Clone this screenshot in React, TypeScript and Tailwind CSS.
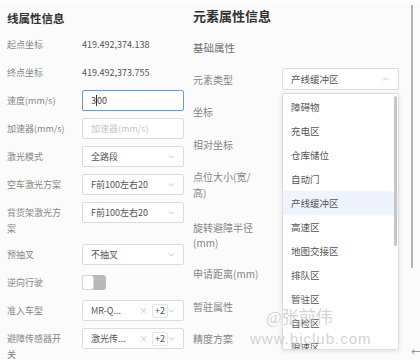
import React from 'react';

const font = { fontFamily: '"Noto Sans CJK SC", "Noto Sans", sans-serif' };

const Caret = ({ up = false }: { up?: boolean }) => (
  <svg width="7" height="4" viewBox="0 0 7 4" className="shrink-0">
    <path d={up ? 'M1 3.5 L3.5 1 L6 3.5' : 'M1 0.5 L3.5 3 L6 0.5'} fill="none" stroke="#c4c4c4" strokeWidth="1" />
  </svg>
);

const Select = ({ value }: { value: string }) => (
  <div className="flex h-[21px] w-[102px] items-center justify-between rounded-[2px] border border-[#dcdcdc] bg-white pl-[8px] pr-[8px]">
    <span className="text-[9px] text-[#555]">{value}</span>
    <Caret />
  </div>
);

const TagSelect = ({ value }: { value: string }) => (
  <div className="flex h-[21px] w-[102px] items-center rounded-[2px] border border-[#dcdcdc] bg-white pl-[8px] pr-[8px]">
    <span className="w-[50px] text-[9px] text-[#555]">{value}</span>
    <span className="text-[9px] text-[#c4c4c4]">×</span>
    <span className="ml-[4px] flex h-[14px] items-center rounded-[2px] border border-[#e3e3e3] px-[2px] text-[9px] text-[#555]">+2</span>
    <span className="ml-auto">
      <Caret />
    </span>
  </div>
);

const Row = ({ label, children, h = 'h-[21px]' }: { label: React.ReactNode; children?: React.ReactNode; h?: string }) => (
  <div className={`flex items-start ${h}`}>
    <div className="w-[75px] pt-[3px] text-[9px] leading-[16px] text-[#868686]">{label}</div>
    {children}
  </div>
);

const options = ['障碍物', '充电区', '仓库储位', '自动门', '产线缓冲区', '高速区', '地图交接区', '排队区', '暂驻区', '自检区', '限速区'];

export default function App() {
  return (
    <div className="relative h-[360px] w-[420px] overflow-hidden bg-white" style={font}>
      <div className="flex h-full pt-[3px]">
        {/* left: line properties */}
        <div className="w-[186px] bg-[#fbfbfb] pl-[7px]">
          <div className="flex h-[31px] items-center text-[11.5px] font-bold text-[#333]">线属性信息</div>
          <div className="flex flex-col gap-[7px]">
            <Row label="起点坐标">
              <span className="pt-[3px] text-[9px] leading-[16px] text-[#555]">419.492,374.138</span>
            </Row>
            <Row label="终点坐标">
              <span className="pt-[3px] text-[9px] leading-[16px] text-[#555]">419.492,373.755</span>
            </Row>
            <Row label="速度(mm/s)">
              <div className="flex h-[21px] w-[102px] items-center rounded-[2px] border border-[#6f95e6] bg-white pl-[8px] text-[9px] text-[#444]">
                3<span className="inline-block h-[11px] w-px bg-[#333]" />00
              </div>
            </Row>
            <Row label="加速器(mm/s)">
              <div className="flex h-[21px] w-[102px] items-center rounded-[2px] border border-[#dcdcdc] bg-white pl-[8px] text-[9px] text-[#c4c4c4]">
                加速器(mm/s)
              </div>
            </Row>
            <Row label="激光模式">
              <Select value="全路段" />
            </Row>
            <Row label="空车激光方案">
              <Select value="F前100左右20" />
            </Row>
            <Row label={<>背货架激光方<br />案</>} h="h-[35px]">
              <Select value="F前100左右20" />
            </Row>
            <Row label="预抽叉">
              <Select value="不抽叉" />
            </Row>
            <Row label="逆向行驶">
              <div className="mt-[3px] flex h-[15px] w-[24px] items-center rounded-[3px] bg-[#b9b9b9]">
                <div className="h-[15px] w-[12px] rounded-[3px] border border-[#d8d8d8] bg-white" />
              </div>
            </Row>
            <Row label="准入车型">
              <TagSelect value="MR-Q..." />
            </Row>
            <Row label={<>避障传感器开<br />关</>} h="h-[35px]">
              <TagSelect value="激光传..." />
            </Row>
          </div>
        </div>

        {/* right: element properties */}
        <div className="flex-1 bg-[#fbfbfb] pl-[7px]">
          <div className="flex h-[26px] items-center text-[13px] font-bold text-[#333]">元素属性信息</div>
          <div className="flex h-[38px] items-center text-[10.5px] text-[#707070]">基础属性</div>
          <div className="flex h-[24px] items-center">
            <div className="w-[89px] text-[10px] text-[#868686]">元素类型</div>
            <div className="relative">
              <div className="flex h-[22px] w-[117px] items-center justify-between rounded-[2px] border border-[#d9d9d9] bg-white pl-[8px] pr-[9px]">
                <span className="text-[9.5px] text-[#555]">产线缓冲区</span>
                <Caret up />
              </div>
              <div className="absolute left-0 top-[25px] z-10 h-[257px] w-[117px] overflow-hidden rounded-[2px] border border-[#dedede] bg-white pt-px shadow-[0_1px_4px_rgba(0,0,0,0.12)]">
                {options.map((o) => (
                  <div
                    key={o}
                    className={`flex h-[24px] items-center pl-[8px] text-[9.5px] text-[#555] ${o === '产线缓冲区' ? 'bg-[#eef3fd]' : ''}`}
                  >
                    {o}
                  </div>
                ))}
                <div className="absolute right-[1px] top-[2px] h-[150px] w-[3px] rounded-full bg-[#c6c6c6]" />
              </div>
            </div>
          </div>
          <div className="flex h-[40px] items-center text-[10px] text-[#868686]">坐标</div>
          <div className="flex h-[26px] items-center text-[10px] text-[#868686]">相对坐标</div>
          <div className="flex h-[56px] items-center text-[10px] leading-[16px] text-[#868686]">
            点位大小(宽/<br />高)
          </div>
          <div className="flex h-[44px] items-center text-[10px] leading-[15px] text-[#868686]">
            旋转避障半径<br />(mm)
          </div>
          <div className="flex h-[32px] items-center text-[10px] text-[#868686]">申请距离(mm)</div>
          <div className="flex h-[34px] items-center text-[10px] text-[#868686]">暂驻属性</div>
          <div className="flex h-[30px] items-center text-[10px] text-[#868686]">精度方案</div>
        </div>
      </div>

      {/* outer scrollbar */}
      <div className="absolute left-[411px] top-[5px] h-[263px] w-[2px] bg-[#b4b4b4]" />
      <span className="absolute left-[411px] top-[344px] text-[10px] text-[#888]">←</span>

      {/* watermark */}
      <div className="pointer-events-none absolute left-[266px] top-[309px] z-20 text-[17px] leading-none text-[#c8c8c8]/80" style={{ fontFamily: '"Liberation Serif", "Noto Sans CJK SC", serif' }}>
        @张前伟
      </div>
      <div className="pointer-events-none absolute left-[250px] top-[331px] z-20 text-[15px] leading-none tracking-[1px] text-[#c8c8c8]/80" style={{ fontFamily: '"Liberation Sans", sans-serif' }}>
        www.bjclub.com
      </div>
    </div>
  );
}
